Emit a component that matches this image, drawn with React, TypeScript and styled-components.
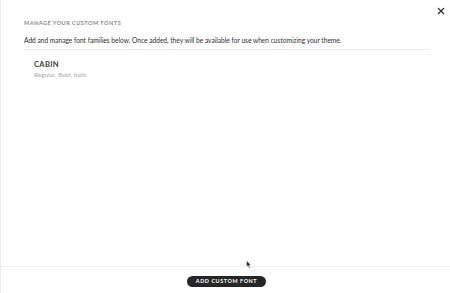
import React from 'react';
import styled, { createGlobalStyle } from 'styled-components';

const GlobalStyle = createGlobalStyle`
    html, body {
        margin: 0;
        padding: 0;
        background: #ffffff;
    }
    body {
        font-family: Lato, 'Open Sans', sans-serif;
    }
`;

const Modal = styled.div`
    position: relative;
    width: 450px;
    height: 293px;
    box-sizing: border-box;
    border-left: 1px solid #ececec;
    display: flex;
    flex-direction: column;
    background: #fff;
    overflow: hidden;
`;

const Body = styled.div`
    flex: 1;
    padding: 19px 20px 0 23px;
    display: flex;
    flex-direction: column;
`;

const Title = styled.h2`
    margin: 0;
    font-size: 5.6px;
    font-weight: 700;
    letter-spacing: 0.45px;
    color: #8a8a8a;
    line-height: 8px;
    text-transform: uppercase;
`;

const Description = styled.p`
    margin: 9px 0 0;
    font-size: 6.6px;
    color: #2e2e2e;
    line-height: 9px;
    padding-bottom: 4px;
    border-bottom: 1px solid #ebebeb;
`;

const FontList = styled.ul`
    list-style: none;
    margin: 0;
    padding: 9px 0 0 10px;
`;

const FontItem = styled.li`
    display: flex;
    flex-direction: column;
    gap: 2px;
`;

const FontName = styled.span`
    font-size: 7.6px;
    font-weight: 700;
    letter-spacing: 0.3px;
    color: #3d3d3d;
    line-height: 10px;
`;

const FontStyles = styled.span`
    font-size: 6.4px;
    color: #a8a8a8;
    line-height: 8px;
`;

const CloseButton = styled.button`
    position: absolute;
    top: 6px;
    right: 4px;
    width: 10px;
    height: 10px;
    padding: 0;
    border: none;
    background: none;
    display: flex;
    align-items: center;
    justify-content: center;
    color: #333;
`;

const Footer = styled.div`
    height: 27px;
    border-top: 1px solid #eeeeee;
    display: flex;
    justify-content: center;
    align-items: center;
    box-sizing: border-box;
    padding-top: 2px;
`;

const PrimaryButton = styled.button`
    height: 11px;
    padding: 0 9px;
    margin-left: 2px;
    border: none;
    border-radius: 6px;
    background: #262626;
    color: #fff;
    font-family: Lato, sans-serif;
    font-size: 5.4px;
    font-weight: 700;
    letter-spacing: 0.6px;
    line-height: 11px;
    text-transform: uppercase;
`;

const Cursor = styled.svg`
    position: absolute;
    left: 245px;
    top: 260px;
`;

const fonts = [{ name: 'Cabin', styles: 'Regular, Bold, Italic' }];

export default function App() {
    return (
        <>
            <GlobalStyle />
            <Modal>
                <CloseButton aria-label="Close">
                    <svg width="8" height="8" viewBox="0 0 8 8">
                        <path d="M1 1L7 7M7 1L1 7" stroke="#333" strokeWidth="1.2" />
                    </svg>
                </CloseButton>
                <Body>
                    <Title>Manage your custom fonts</Title>
                    <Description>
                        Add and manage font families below. Once added, they will be available for use when customizing
                        your theme.
                    </Description>
                    <FontList>
                        {fonts.map((f) => (
                            <FontItem key={f.name}>
                                <FontName>{f.name.toUpperCase()}</FontName>
                                <FontStyles>{f.styles}</FontStyles>
                            </FontItem>
                        ))}
                    </FontList>
                </Body>
                <Footer>
                    <PrimaryButton>Add custom font</PrimaryButton>
                </Footer>
                <Cursor width="6" height="9" viewBox="0 0 6 9">
                    <path d="M0.5 0.5L0.5 7L2 5.6L3.2 8.3L4.2 7.9L3 5.2L5 5.2Z" fill="#222" stroke="#fff" strokeWidth="0.5" />
                </Cursor>
            </Modal>
        </>
    );
}
